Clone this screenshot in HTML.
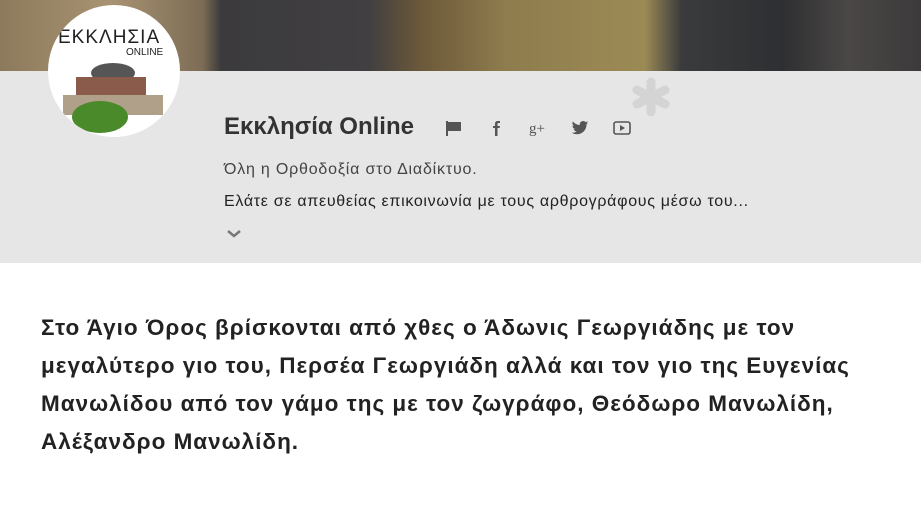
<!DOCTYPE html>
<html><head><meta charset="utf-8"><style>
body{margin:0;width:921px;height:511px;overflow:hidden;background:#fff;font-family:"Liberation Sans",sans-serif;position:relative}
.hero{position:absolute;left:0;top:0;width:921px;height:71px;background:linear-gradient(90deg,#8c7a5c 0%,#a89372 12%,#7d6c55 22%,#3b3a3c 24%,#413f41 40%,#6d5a3a 46%,#8f7c4e 55%,#9c8a55 70%,#3a3b3d 74%,#2e2f32 85%,#4a4746 92%,#3c3a3a 100%)}
.band{position:absolute;left:0;top:71px;width:921px;height:192px;background:#e6e6e6}
.av{position:absolute;left:48px;top:5px;width:132px;height:132px;border-radius:50%;background:#fff;overflow:hidden}
.title{position:absolute;left:224px;top:113px;font-size:24px;font-weight:bold;color:#333}
.t1{position:absolute;left:224px;top:161px;font-size:16px;color:#444;letter-spacing:0.8px}
.t2{position:absolute;left:224px;top:193px;font-size:16px;color:#222;letter-spacing:0.7px;white-space:nowrap}
.icons{position:absolute;left:445px;top:119px;display:flex;gap:24px;color:#555}
.main{position:absolute;left:41px;top:309px;width:880px;font-size:22.5px;font-weight:bold;line-height:38px;color:#222;letter-spacing:1px;white-space:nowrap}
</style></head><body>
<div class="hero"></div>
<div class="band"></div>
<div class="av">
<div style="position:absolute;left:10px;top:22px;font-size:19px;color:#222;letter-spacing:1px">ΕΚΚΛΗΣΙΑ</div>
<div style="position:absolute;left:78px;top:42px;font-size:10px;color:#222">ONLINE</div>
<svg width="132" height="132" style="position:absolute;left:0;top:0"><ellipse cx="65" cy="68" rx="22" ry="10" fill="#555"/><rect x="28" y="72" width="70" height="28" fill="#8a5a4a"/><rect x="15" y="90" width="100" height="20" fill="#b0a08a"/><ellipse cx="52" cy="112" rx="28" ry="16" fill="#4a8a2a"/></svg>
</div>
<svg style="position:absolute;left:630px;top:77px" width="42" height="40" viewBox="0 0 42 40"><g stroke="#d4d4d4" stroke-width="9" stroke-linecap="round"><line x1="21" y1="5" x2="21" y2="35"/><line x1="7" y1="13" x2="35" y2="27"/><line x1="7" y1="27" x2="35" y2="13"/></g></svg>
<div class="title">Εκκλησία Online</div>
<div class="icons">
<svg width="18" height="18" viewBox="0 0 18 18"><rect x="1" y="2" width="2" height="15" fill="#555"/><path d="M3 3h13v9H3z" fill="#555"/></svg>
<svg width="18" height="18" viewBox="0 0 18 18"><path d="M8 17V9H6V7h2V5c0-2 1-3 3-3h2v2h-1.5c-.8 0-1 .4-1 1v2H13l-.4 2H10.5v8z" fill="#555"/></svg>
<svg width="18" height="18" viewBox="0 0 18 18"><text x="0" y="14" font-size="15" font-family="Liberation Serif" fill="#555">g+</text></svg>
<svg width="18" height="18" viewBox="0 0 24 24"><path d="M23 5a9 9 0 01-2.6.7A4.5 4.5 0 0022.4 3a9 9 0 01-2.9 1.1A4.5 4.5 0 0011.8 8 12.8 12.8 0 012.5 3.300a4.5 4.5 0 001.4 6 4.5 4.5 0 01-2-.6 4.5 4.5 0 003.6 4.5 4.5 4.5 0 01-2 .1 4.5 4.5 0 004.2 3.1A9 9 0 011 18.3 12.8 12.8 0 007.9 20.3c8.300 0 12.8-6.9 12.8-12.8v-.6A9 9 0 0023 5z" fill="#555"/></svg>
<svg width="18" height="18" viewBox="0 0 18 18"><rect x="1" y="3" width="16" height="12" rx="2" fill="none" stroke="#555" stroke-width="1.6"/><path d="M7 6l5 3-5 3z" fill="#555"/></svg>
</div>
<div class="t1">Όλη η Ορθοδοξία στο Διαδίκτυο.</div>
<div class="t2">Ελάτε σε απευθείας επικοινωνία με τους αρθρογράφους μέσω του...</div>
<svg style="position:absolute;left:226px;top:229px" width="16" height="10" viewBox="0 0 16 10"><path d="M2 2l6 5 6-5" fill="none" stroke="#777" stroke-width="2.5"/></svg>
<div class="main">Στο Άγιο Όρος βρίσκονται από χθες ο Άδωνις Γεωργιάδης με τον<br>μεγαλύτερο γιο του, Περσέα Γεωργιάδη αλλά και τον γιο της Ευγενίας<br>Μανωλίδου από τον γάμο της με τον ζωγράφο, Θεόδωρο Μανωλίδη,<br>Αλέξανδρο Μανωλίδη.</div>
</body></html>
